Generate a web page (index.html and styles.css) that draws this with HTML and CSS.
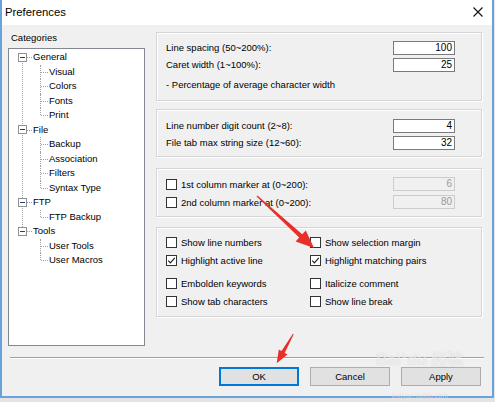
FILE: index.html
```html
<!doctype html>
<html lang="en">
  <head>
    <meta charset="UTF-8" />
    <title>Preferences</title>
    <link rel="stylesheet" href="styles.css">
  </head>
  <body>
    <div class="window">
      <!-- Title bar -->
      <div class="titlebar">
        <span class="title">Preferences</span>
        <svg class="close" width="10" height="10" viewBox="0 0 10 10">
          <path d="M0.5 0.5 L9.5 9.5 M9.5 0.5 L0.5 9.5" stroke="#111" stroke-width="1.1" fill="none" />
        </svg>
      </div>

      <div class="content">
        <div class="main">
          <!-- Categories tree -->
          <div class="left">
            <div class="cat-label">Categories</div>
            <ul class="tree">
              <li>
                <div class="row root"><span class="exp"></span><span class="text">General</span></div>
                <ul class="children">
                  <li><div class="row">Visual</div></li>
                  <li><div class="row">Colors</div></li>
                  <li><div class="row">Fonts</div></li>
                  <li><div class="row">Print</div></li>
                </ul>
              </li>
              <li>
                <div class="row root"><span class="exp"></span><span class="text">File</span></div>
                <ul class="children">
                  <li><div class="row">Backup</div></li>
                  <li><div class="row">Association</div></li>
                  <li><div class="row">Filters</div></li>
                  <li><div class="row">Syntax Type</div></li>
                </ul>
              </li>
              <li>
                <div class="row root"><span class="exp"></span><span class="text">FTP</span></div>
                <ul class="children">
                  <li><div class="row">FTP Backup</div></li>
                </ul>
              </li>
              <li>
                <div class="row root"><span class="exp"></span><span class="text">Tools</span></div>
                <ul class="children">
                  <li><div class="row">User Tools</div></li>
                  <li><div class="row">User Macros</div></li>
                </ul>
              </li>
            </ul>
          </div>

          <!-- Settings groups -->
          <div class="right">
            <div class="group g1">
              <div class="field"><span>Line spacing (50~200%):</span><span class="input">100</span></div>
              <div class="field"><span>Caret width (1~100%):</span><span class="input">25</span></div>
              <div class="note">- Percentage of average character width</div>
            </div>

            <div class="group g2">
              <div class="field"><span>Line number digit count (2~8):</span><span class="input">4</span></div>
              <div class="field"><span>File tab max string size (12~60):</span><span class="input">32</span></div>
            </div>

            <div class="group g3">
              <div class="field tall"><label class="check"><span class="box"></span>1st column marker at (0~200):</label><span class="input disabled">6</span></div>
              <div class="field tall"><label class="check"><span class="box"></span>2nd column marker at (0~200):</label><span class="input disabled">80</span></div>
            </div>

            <div class="group g4">
              <div class="checks">
                <label class="check"><span class="box"></span>Show line numbers</label>
                <label class="check"><span class="box"></span>Show selection margin</label>
                <label class="check"><span class="box checked"><svg width="9" height="9" viewBox="0 0 9 9"><path d="M1.2 4.6 L3.4 6.8 L7.8 1.8" stroke="#222" stroke-width="1.2" fill="none" /></svg></span>Highlight active line</label>
                <label class="check"><span class="box checked"><svg width="9" height="9" viewBox="0 0 9 9"><path d="M1.2 4.6 L3.4 6.8 L7.8 1.8" stroke="#222" stroke-width="1.2" fill="none" /></svg></span>Highlight matching pairs</label>
              </div>
              <div class="checks second">
                <label class="check"><span class="box"></span>Embolden keywords</label>
                <label class="check"><span class="box"></span>Italicize comment</label>
                <label class="check"><span class="box"></span>Show tab characters</label>
                <label class="check"><span class="box"></span>Show line break</label>
              </div>
            </div>
          </div>
        </div>

        <div class="separator"></div>

        <div class="footer">
          <button class="btn default">OK</button>
          <button class="btn">Cancel</button>
          <button class="btn">Apply</button>
        </div>
      </div>
    </div>

    <!-- Watermark -->
    <div class="watermark">
      <span class="wm-main">Bai<span class="paw">&#9679;</span>du 经验</span>
      <span class="wm-sub">jingyan.baidu.com</span>
    </div>

    <!-- Red annotation arrows -->
    <svg class="arrows" width="495" height="402" viewBox="0 0 495 402">
      <polygon fill="#e8302a" points="256.6,196.5 299.2,237.6 295.6,241.4 314,248 305.8,230.4 302.2,234.2 257.4,195.5" />
      <polygon fill="#e8302a" points="293.7,334.3 284.7,352.9 287.5,354.5 276.7,363.3 278.8,349.6 281.5,351.1 292.9,333.8" />
    </svg>
  </body>
</html>
```

FILE: styles.css
```css
* {
  margin: 0;
  padding: 0;
  box-sizing: border-box;
}

body {
  width: 495px;
  height: 402px;
  background: #e4e4e4;
  font-family: "Liberation Sans", Arial, sans-serif;
  font-size: 9.5px;
  color: #000;
  position: relative;
  overflow: hidden;
}

/* Окно */
.window {
  width: 494px;
  height: 398px;
  border: 2px solid #6aa3dc;
  border-top: 0;
  background: #f0f0f0;
}

.titlebar {
  height: 25px;
  background: #fff;
  display: flex;
  align-items: center;
  justify-content: space-between;
  padding: 0 9px 0 3px;
}

.title {
  font-size: 11.3px;
  padding-bottom: 1px;
}

.close {
  display: block;
  margin-top: -1px;
}

.content {
  padding: 7px 0 0 6px;
}

.main {
  display: flex;
  gap: 11px;
}

/* Дерево категорий */
.left {
  width: 137px;
}

.cat-label {
  height: 12px;
  line-height: 12px;
  padding-left: 3px;
  margin-bottom: 4px;
}

.tree {
  list-style: none;
  height: 298px;
  background: #fff;
  border: 1px solid #828790;
  padding-top: 1px;
}

.tree ul {
  list-style: none;
}

.tree li {
  position: relative;
}

.row {
  height: 14.5px;
  line-height: 14.5px;
  padding-left: 40px;
  white-space: nowrap;
}

.row.root {
  padding-left: 9px;
  display: flex;
  align-items: center;
}

/* Линии дерева */
.tree > li:not(:last-child)::before {
  content: '';
  position: absolute;
  left: 13px;
  top: 7px;
  bottom: -7px;
  border-left: 1px dotted #a0a0a0;
}

.children > li::before {
  content: '';
  position: absolute;
  left: 31px;
  top: 0;
  height: 100%;
  border-left: 1px dotted #a0a0a0;
}

.children > li:last-child::before {
  height: 7px;
}

.children > li::after {
  content: '';
  position: absolute;
  left: 32px;
  top: 7px;
  width: 7px;
  border-top: 1px dotted #a0a0a0;
}

.exp {
  position: relative;
  z-index: 1;
  width: 9px;
  height: 9px;
  border: 1px solid #919191;
  background: #fff;
  flex-shrink: 0;
}

.exp::after {
  content: '';
  position: absolute;
  left: 1px;
  top: 3px;
  width: 5px;
  border-top: 1px solid #2a3e8c;
}

.row.root .text {
  margin-left: 6px;
  position: relative;
}

.row.root .text::before {
  content: '';
  position: absolute;
  left: -6px;
  top: 7px;
  width: 5px;
  border-top: 1px dotted #a0a0a0;
}

/* Группы настроек */
.right {
  width: 326px;
}

.group {
  border: 1px solid #d5d5d5;
  box-shadow: inset 1px 1px 0 #fff, 1px 1px 0 #fff;
  padding-left: 9px;
  padding-right: 26px;
}

.g1 {
  height: 69px;
  padding-top: 6px;
  margin-bottom: 8px;
}

.g2 {
  height: 48px;
  padding-top: 7px;
  margin-bottom: 11px;
}

.g3 {
  height: 49px;
  padding-top: 6px;
  margin-bottom: 10px;
}

.g4 {
  height: 90px;
  padding-top: 5px;
}

.field {
  height: 17px;
  display: flex;
  align-items: center;
  justify-content: space-between;
}

.field.tall {
  height: 18px;
}

.note {
  margin-top: 3px;
  height: 17px;
  line-height: 17px;
}

.input {
  width: 62px;
  height: 14px;
  line-height: 12px;
  border: 1px solid #7a7a7a;
  background: #fff;
  text-align: right;
  padding-right: 2px;
  font-size: 10px;
}

.input.disabled {
  border-color: #cccccc;
  background: #f0f0f0;
  color: #9a9a9a;
}

/* Чекбоксы */
.checks {
  display: grid;
  grid-template-columns: 144px 1fr;
  grid-auto-rows: 18px;
}

.checks.second {
  margin-top: 5px;
}

.check {
  display: flex;
  align-items: center;
  white-space: nowrap;
}

.box {
  width: 11px;
  height: 11px;
  border: 1px solid #333;
  background: #fff;
  margin-right: 4px;
  display: flex;
  align-items: center;
  justify-content: center;
  flex-shrink: 0;
}

.box svg {
  display: block;
}

.separator {
  margin-top: 11px;
  width: 474px;
  margin-left: 2px;
  height: 2px;
  border-top: 1px solid #a0a0a0;
  border-bottom: 1px solid #fff;
}

/* Кнопки */
.footer {
  display: flex;
  justify-content: flex-end;
  gap: 11px;
  padding-right: 11px;
  margin-top: 8px;
}

.btn {
  width: 80px;
  height: 19px;
  border: 1px solid #adadad;
  background: #e1e1e1;
  font-family: "Liberation Sans", Arial, sans-serif;
  font-size: 9.5px;
  color: #000;
}

.btn.default {
  border: 2px solid #0078d7;
}

/* Водяной знак */
.watermark {
  position: absolute;
  left: 376px;
  top: 346px;
  display: flex;
  flex-direction: column;
  align-items: center;
  color: rgba(255, 255, 255, 0.6);
  text-shadow: 0 0 1px rgba(0, 0, 0, 0.15);
  pointer-events: none;
}

.wm-main {
  font-size: 16px;
  font-weight: 700;
  font-family: "Liberation Sans", "Noto Sans CJK SC", sans-serif;
  line-height: 18px;
}

.paw {
  font-size: 11px;
  vertical-align: 6px;
}

.wm-sub {
  font-size: 7px;
  line-height: 8px;
  margin-top: 23px;
}

.arrows {
  position: absolute;
  left: 0;
  top: 0;
  pointer-events: none;
}
```
